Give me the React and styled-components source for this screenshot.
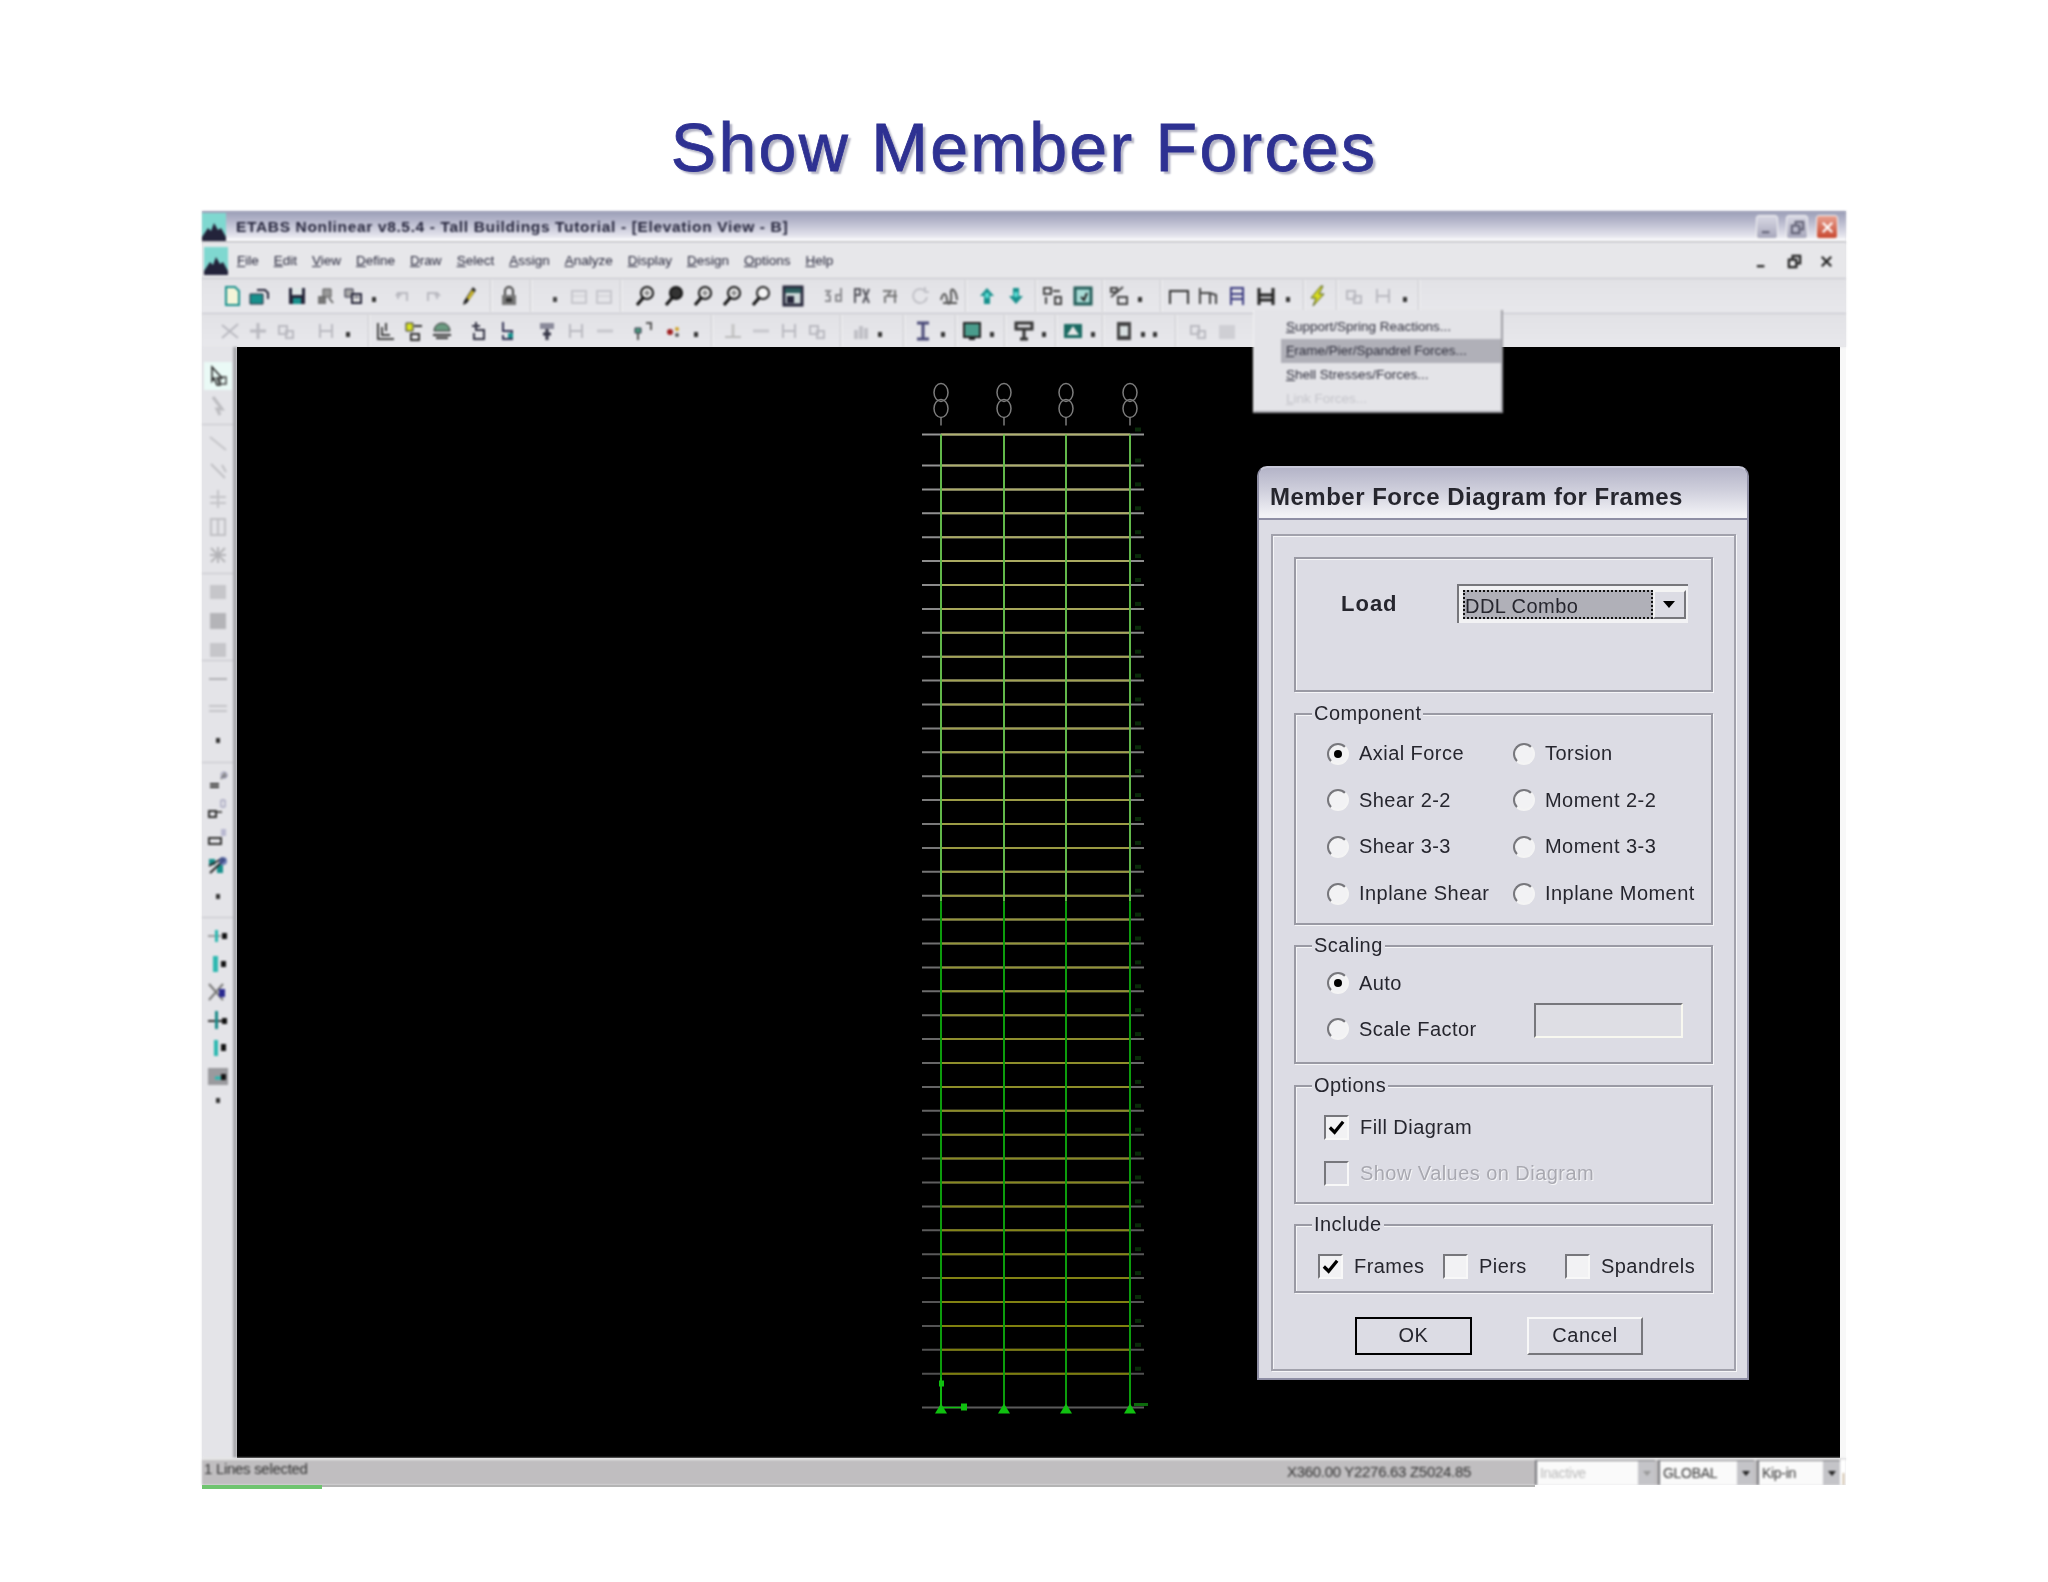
import React from "react";
import styled, { createGlobalStyle } from "styled-components";

const GlobalStyle = createGlobalStyle`
  html, body { margin: 0; padding: 0; background: #fff; }
  * { box-sizing: border-box; }
`;

const TEAL = "#17908c";
const DARK = "#26263a";
const FADE = "#b9b9c0";

const shapes = {
  new: <><path d="M5 2h9l4 4v14H5z" fill="#f4f4d8" stroke={TEAL} strokeWidth="2" /></>,
  open: <><path d="M2 9h13v10H2z" fill={TEAL} stroke={DARK} /><path d="M9 5h8l3 3v6" fill="none" stroke={DARK} strokeWidth="2" /></>,
  save: <><path d="M3 3h16v16H3z" fill={DARK} /><path d="M6 3h10v7H6z" fill="#dfe6e6" /><path d="M7 13h8v6H7z" fill={TEAL} /></>,
  saveas: <><path d="M4 11h8v8H4z" fill="#777" /><path d="M9 4h8v8H9z" fill="#999" stroke="#555" /><path d="M15 13l4 5" stroke="#666" strokeWidth="2" /></>,
  print: <><path d="M3 4h8v8H3z" fill="#aaa" stroke={DARK} /><path d="M10 9h9v9h-9z" fill="#ddd" stroke={DARK} strokeWidth="2" /><path d="M12 12h5" stroke={DARK} /></>,
  undo: <path d="M5 14V8h9v8M5 8l-2 3M5 8l3 3" fill="none" stroke={FADE} strokeWidth="2" />,
  redo: <path d="M17 14V8H8v8M17 8l-2 3M17 8l3 3" fill="none" stroke={FADE} strokeWidth="2" />,
  pen: <><path d="M15 2l3 3-9 13-4 2 1-4z" fill="#222" /><path d="M14 5l2 2-5 8-2-2z" fill="#d8c020" /></>,
  lock: <><path d="M7 10V6a4 4 0 018 0v4" fill="none" stroke="#444" strokeWidth="2" /><path d="M4 10h14v10H4z" fill="#777" /><path d="M8 13h6v4H8z" fill="#333" /></>,
  tick: <path d="M10 12h4v5h-4z" fill="#444" />,
  faint: <><path d="M4 6h14v12H4z" fill="none" stroke="#c6c6cc" strokeWidth="2" /><path d="M4 11h14" stroke="#c6c6cc" /></>,
  zoom: <><circle cx="13" cy="8" r="6" fill="#eee" stroke="#111" strokeWidth="2" /><path d="M9 13l-6 7" stroke="#111" strokeWidth="3" /><path d="M10 8h6M13 5v6" stroke="#444" /></>,
  zoomd: <><circle cx="13" cy="8" r="6" fill="#333" stroke="#111" strokeWidth="2" /><path d="M9 13l-6 7" stroke="#111" strokeWidth="3" /></>,
  zoome: <><circle cx="13" cy="8" r="6" fill="#f4f4f4" stroke="#222" strokeWidth="2" /><path d="M9 13l-6 7" stroke="#111" strokeWidth="3" /></>,
  win: <><path d="M2 2h18v18H2z" fill="#cfdada" stroke={DARK} strokeWidth="3" /><path d="M3 3h16v5H3z" fill="#2c5c5c" /><path d="M5 11h7v7H5z" fill={DARK} /></>,
  three: <><path d="M3 6h5l-3 4 3 1v5H3" fill="none" stroke="#8c8c90" strokeWidth="2" /><path d="M19 3v13h-5v-6h5" fill="none" stroke="#8c8c90" strokeWidth="2" /></>,
  plan: <><path d="M4 4h5v6H4zM4 10v8M12 4l6 14M18 4l-6 14" fill="none" stroke="#56565e" strokeWidth="2" /></>,
  elev: <><path d="M3 6h8l-4 5h10M5 11v7M15 5v13" fill="none" stroke="#777" strokeWidth="2" /></>,
  rot: <path d="M16 6a7 7 0 10 2 6M16 2v5h4" fill="none" stroke="#c2c2c8" strokeWidth="2" />,
  perspective: <path d="M3 15c2-8 5-8 6 0s5 2 4-6 5-5 6 6M5 18h14" fill="none" stroke="#555" strokeWidth="2" />,
  up: <><path d="M11 3l7 8h-4v8H8v-8H4z" fill={TEAL} /><path d="M9 8h4v5H9z" fill="#55d8d0" /></>,
  down: <><path d="M11 19l7-8h-4V3H8v8H4z" fill={TEAL} /><path d="M9 7h4v5H9z" fill="#55d8d0" /></>,
  snap: <><path d="M3 3h7v6H3zM12 6h7M5 12v7M14 12h6v7h-6z" fill="none" stroke="#444" strokeWidth="2" /></>,
  box: <><path d="M3 3h16v16H3z" fill="#a9dcd6" stroke="#225c58" strokeWidth="3" /><path d="M9 12l3 3 3-7" fill="none" stroke="#222" strokeWidth="2" /></>,
  pct: <><path d="M3 12l12-10" stroke="#444" strokeWidth="2" /><path d="M3 3h6v4H3z" fill="none" stroke="#444" strokeWidth="2" /><path d="M10 12h9v7h-9z" fill="none" stroke="#444" strokeWidth="2" /></>,
  gate: <path d="M2 19V6h18v13" fill="none" stroke="#333" strokeWidth="2" />,
  gate2: <path d="M3 19V3M3 8h10l6 2v9M13 8v11" fill="none" stroke="#444" strokeWidth="2" />,
  gate3: <path d="M5 20V3h12v17M5 9h12M5 14h12" fill="none" stroke="#3a3a80" strokeWidth="2" />,
  gate4: <path d="M4 20V3M18 20V3M4 10h14M4 15h14" fill="none" stroke="#222" strokeWidth="3" />,
  bolt: <path d="M14 1L4 13h5l-3 8 11-12h-5l4-8z" fill="#d8dc20" stroke="#556020" />,
  fade1: <path d="M3 18L19 4M3 5l16 13" stroke={FADE} strokeWidth="2" />,
  fade2: <path d="M11 3v16M3 11h16" stroke={FADE} strokeWidth="3" />,
  fade3: <path d="M4 6h8v8H4zM11 11h7v7h-7z" fill="none" stroke={FADE} strokeWidth="2" />,
  fade4: <path d="M5 4v14M5 11h12M17 4v14" fill="none" stroke={FADE} strokeWidth="2" />,
  frame1: <path d="M3 3v16h16M7 7v8h8M11 3v8" fill="none" stroke="#444" strokeWidth="2" />,
  frame2: <><path d="M3 3h7v8H3z" fill="#d8e020" stroke="#333" /><path d="M11 6h8M8 14h8v6H8z" fill="none" stroke="#333" strokeWidth="2" /></>,
  frame3: <><path d="M3 11a8 8 0 0116 0z" fill="#6a9a80" stroke="#333" /><path d="M2 15h18M5 18h12" stroke="#333" strokeWidth="2" /></>,
  frame4: <path d="M7 2v8h8v9H5v-6M3 6h8" fill="none" stroke="#334" strokeWidth="2" />,
  frame5: <><path d="M7 2v9h9v8H7v-4" fill="none" stroke="#335" strokeWidth="2" /><path d="M12 13h5v5h-5z" fill={TEAL} /></>,
  frame6: <><path d="M4 3h14v6H4z" fill="#8a8a9a" /><path d="M11 9v11M7 14h8" stroke="#334" strokeWidth="3" /></>,
  frame7: <><path d="M3 8h6v5H3z" fill="#4a9a80" stroke="#334" /><path d="M6 13v7M14 3h5v7" fill="none" stroke="#555" strokeWidth="2" /></>,
  dots: <><circle cx="8" cy="12" r="3" fill="#a02020" /><circle cx="15" cy="9" r="2" fill="#d0a020" /><circle cx="15" cy="15" r="2" fill="#555" /></>,
  bar: <><path d="M3 17h16" stroke="#bbb" strokeWidth="2" /><path d="M11 4v12" stroke="#c4c4c4" strokeWidth="3" /></>,
  dash: <path d="M3 11h16" stroke="#c6c6cc" strokeWidth="3" />,
  chart: <path d="M4 19V10h4v9zM9 19V6h4v13zM14 19V8h4v11z" fill="#c0c0c6" />,
  ibeam: <path d="M5 3h12M5 19h12M11 3v16" fill="none" stroke="#4a4a78" strokeWidth="3" />,
  deck: <><path d="M3 3h16v14H3z" fill="#4a9c8c" stroke="#222" strokeWidth="2" /><path d="M8 17h6v3H8z" fill="#222" /></>,
  glass: <><path d="M3 3h16v6H3z" fill="none" stroke="#333" strokeWidth="3" /><path d="M11 9v10M7 19h8" stroke="#333" strokeWidth="3" /></>,
  tri: <><path d="M2 4h18v14H2z" fill="#1a6a62" /><path d="M11 6l6 9H5z" fill="#e8e8e8" /></>,
  col: <><path d="M4 2h14v18H4z" fill="#444" /><path d="M7 6h8v10H7z" fill="#d8e0e0" /></>,
  blur: <path d="M3 5h16v14H3z" fill="#cfcfd4" />,
  cursor: <><path d="M5 2l10 11h-5l3 7h-3l-3-7-2 3z" fill="#e8f8f4" stroke="#222" strokeWidth="1.5" /><path d="M13 12h6v7h-6z" fill="none" stroke="#444" strokeWidth="1.5" /></>,
  pointer2: <path d="M6 2l9 12h-5l3 6" fill="none" stroke="#bcbcc0" strokeWidth="3" />,
  diag: <path d="M3 5l16 13" stroke="#c4c4c8" strokeWidth="2" />,
  diag2: <path d="M4 4l14 14M15 5l4 7" stroke="#c0c0c4" strokeWidth="2" />,
  cross: <path d="M11 2v18M3 9h16M3 15h16" stroke="#c4c4c8" strokeWidth="2" />,
  crossb: <path d="M4 3h14v16H4zM11 3v16" fill="none" stroke="#c0c0c4" strokeWidth="2" />,
  star: <path d="M4 4l14 14M18 4L4 18M11 3v16M3 11h16" stroke="#b4b4b8" strokeWidth="2" />,
  slab: <path d="M3 4h16v14H3z" fill="#c6c6ca" />,
  slabd: <path d="M3 3h16v16H3z" fill="#b4b4b8" />,
  line: <path d="M2 11h18" stroke="#b0b0b4" strokeWidth="2" />,
  linee: <path d="M2 9h18M2 14h18" stroke="#c4c4c8" strokeWidth="2" />,
  node1: <><path d="M3 17h9M3 14h9" stroke="#333" strokeWidth="2" /><path d="M14 9l4-6M17 8l3-3" stroke="#777" strokeWidth="2" /><circle cx="17" cy="5" r="3" fill="none" stroke="#9090b0" /></>,
  node2: <><path d="M2 13h7v6H2z" fill="none" stroke="#333" strokeWidth="2" /><path d="M10 14h5" stroke="#555" strokeWidth="2" /><path d="M14 2h4v7h-4z" fill="none" stroke="#9090b0" /></>,
  node3: <><path d="M2 12h12v6H2z" fill="none" stroke="#333" strokeWidth="2" /><path d="M14 3h5v7h-5z" fill="#b8b8d0" /></>,
  node4: <><path d="M2 5h6v6H2zM10 11h6v8h-6z" fill={TEAL} /><path d="M2 12l14-8M3 19L18 5" stroke="#222" strokeWidth="2" /><circle cx="16" cy="7" r="4" fill="#3a50a0" opacity=".7" /></>,
  fix1: <><path d="M1 11h13" stroke="#555" /><path d="M8 5h3v12H8z" fill="#2cb8b0" /><path d="M15 8h5v6h-5z" fill="#111" /></>,
  fix2: <><path d="M6 3h5v16H6z" fill="#2cb8b0" /><path d="M14 8h5v6h-5z" fill="#111" /></>,
  fix3: <><path d="M2 3l14 16M2 19L16 3" stroke="#777" strokeWidth="2" /><path d="M12 8h6v8h-6z" fill="#2a2a90" /></>,
  fix4: <><path d="M1 12h14" stroke="#333" strokeWidth="2" /><path d="M8 2h3v18H8z" fill="#1a8a88" /><path d="M15 9h5v6h-5z" fill="#111" /></>,
  fix5: <><path d="M7 3h4v16H7z" fill="#2cb8b0" /><path d="M12 10h7M14 7h5v7h-5z" fill="#111" /></>,
  fix6: <><path d="M1 3h20v17H1z" fill="#9a9a9e" /><path d="M8 13h6" stroke="#2cb8b0" strokeWidth="3" /><path d="M14 9h5v6h-5z" fill="#111" /></>,
};

// one row of the toolbar: each group sits $ml after what is before it
const rowOne = [
  { ml: 19, gap: 5, items: ["new", "open"] },
  { ml: 16, gap: 6, items: ["save", "saveas", "print", "."] },
  { ml: 15, gap: 5, items: ["undo", "redo"] },
  { ml: 16, gap: 0, items: ["pen"] },
  { sep: 10 },
  { ml: 6, gap: 0, items: ["lock"] },
  { sep: 10 },
  { ml: 11, gap: 3, items: ["tick", "faint", "faint"] },
  { sep: 5 },
  { ml: 12, gap: 7, items: ["zoom", "zoomd", "zoom", "zoom", "zoome"] },
  { ml: 10, gap: 0, items: ["win"] },
  { ml: 18, gap: 7, items: ["three", "plan", "elev", "rot", "perspective"] },
  { sep: 5 },
  { ml: 9, gap: 7, items: ["up", "down"] },
  { sep: 8 },
  { ml: 4, gap: 9, items: ["snap", "box"] },
  { sep: 8 },
  { ml: 4, gap: 6, items: ["pct", "."] },
  { sep: 16 },
  { ml: 6, gap: 7, items: ["gate", "gate2", "gate3", "gate4", "."] },
  { sep: 11 },
  { ml: 2, gap: 0, items: ["bolt"] },
  { sep: 7 },
  { ml: 5, gap: 7, items: ["fade3", "fade4", "."] },
  { sep: 9 },
];

const rowTwo = [
  { ml: 17, gap: 6, items: ["fade1", "fade2", "fade3"] },
  { ml: 18, gap: 7, items: ["fade4", "."] },
  { sep: 16 },
  { ml: 5, gap: 6, items: ["frame1", "frame2", "frame3"] },
  { ml: 16, gap: 5, items: ["frame4", "frame5"] },
  { ml: 18, gap: 7, items: ["frame6", "fade4", "dash"] },
  { ml: 16, gap: 8, items: ["frame7", "dots", "."] },
  { sep: 11 },
  { ml: 9, gap: 6, items: ["bar", "dash", "fade4", "fade3"] },
  { sep: 12 },
  { ml: 8, gap: 4, items: ["chart", "."] },
  { sep: 19 },
  { ml: 7, gap: 5, items: ["ibeam", "."] },
  { sep: 8 },
  { ml: 4, gap: 5, items: ["deck", "."] },
  { sep: 8 },
  { ml: 7, gap: 5, items: ["glass", "."] },
  { sep: 7 },
  { ml: 5, gap: 5, items: ["tri", "."] },
  { sep: 5 },
  { ml: 9, gap: 4, items: ["col", ".", "."] },
  { sep: 16 },
  { ml: 10, gap: 7, items: ["fade3", "blur"] },
];

const sideGroups = [
  { mt: 18, gap: 8, items: ["cursor", "pointer2"] },
  { mt: 15, gap: 6, line: true, items: ["diag", "diag2", "cross", "crossb", "star"] },
  { mt: 15, gap: 7, line: true, items: ["slab", "slabd", "slab"] },
  { mt: 7, gap: 7, line: true, items: ["line", "linee"] },
  { mt: 12, gap: 0, items: ["."] },
  { mt: 27, gap: 6, line: true, items: ["node1", "node2", "node3", "node4"] },
  { mt: 11, gap: 0, items: ["."] },
  { mt: 26, gap: 6, line: true, items: ["fix1", "fix2", "fix3", "fix4", "fix5", "fix6"] },
  { mt: 4, gap: 0, items: ["."] },
];

const menus = [
  ["F", "ile"], ["E", "dit"], ["V", "iew"], ["D", "efine"], ["D", "raw"], ["S", "elect"],
  ["A", "ssign"], ["A", "nalyze"], ["D", "isplay"], ["D", "esign"], ["O", "ptions"], ["H", "elp"],
];

const Tool = ({ kind }) =>
  kind === "." ? (
    <ToolDot />
  ) : (
    <ToolIcon viewBox="0 0 22 22">{shapes[kind]}</ToolIcon>
  );

const ToolRow = ({ groups, $height }) => (
  <Toolbar $height={$height}>
    {groups.map((g, i) =>
      g.sep ? (
        <ToolSep key={i} $ml={g.sep} />
      ) : (
        <ToolGroup key={i} $ml={g.ml} $gap={g.gap}>
          {g.items.map((k, j) => (
            <Tool key={j} kind={k} />
          ))}
        </ToolGroup>
      )
    )}
  </Toolbar>
);

const AppLogo = () => (
  <LogoSvg viewBox="0 0 24 28">
    <path d="M0 0h24v28H0z" fill="#7fd8d0" />
    <path d="M0 24l6-9 3 3 3-8 4 7 3-2 5 9z" fill="#23233a" />
    <path d="M0 24h24v4H0z" fill="#23233a" />
  </LogoSvg>
);

// the frame elevation drawn on the black canvas
const storyLines = [433, ...Array.from({ length: 39 }, (_, i) => 464 + i * 23.9)];
const columns = [941, 1004, 1066, 1130];

const mix = (a, b, t) => `rgb(${a.map((v, i) => Math.round(v + (b[i] - v) * t)).join(",")})`;

const Elevation = () => (
  <CanvasSvg viewBox="237 347 1603 1108">
    {columns.map((x) => (
      <g key={x} fill="none" stroke="#7c7c7c" strokeWidth="1.5">
        <ellipse cx={x} cy="391" rx="7" ry="9" />
        <ellipse cx={x} cy="407" rx="7" ry="9" />
        <line x1={x} y1="416" x2={x} y2="424" />
      </g>
    ))}
    {storyLines.map((y) => {
      const t = (y - 433) / 940;
      return (
        <g key={y} strokeWidth="2">
          <line x1="922" x2="1144" y1={y} y2={y} stroke={mix([150, 150, 150], [80, 80, 80], t)} />
          <line x1="941" x2="1130" y1={y} y2={y} stroke={mix([176, 176, 110], [125, 125, 10], t)} />
          <rect x="1135" y={y - 7} width="6" height="4" fill="#0a2a0a" />
        </g>
      );
    })}
    <line x1="922" x2="1144" y1="1406" y2="1406" stroke="#5a5a5a" strokeWidth="2" />
    {columns.map((x) => (
      <g key={x}>
        <line x1={x} x2={x} y1="433" y2="900" stroke="#62b84a" strokeWidth="2" />
        <line x1={x} x2={x} y1="900" y2="1406" stroke="#0c9c0c" strokeWidth="2" />
        <path d={`M${x - 6} 1412l6-10 6 10z`} fill="#10c010" />
      </g>
    ))}
    <path d="M941 1406h22M941 1406v-30" stroke="#10c010" strokeWidth="1.5" />
    <rect x="961" y="1402" width="6" height="7" fill="#10c010" />
    <rect x="939" y="1379" width="5" height="6" fill="#10c010" />
    <path d="M1134 1403h14" stroke="#0c6a0c" strokeWidth="3" />
  </CanvasSvg>
);

const Radio = ({ on, children }) => (
  <Option>
    <RadioMark $on={on} />
    <span>{children}</span>
  </Option>
);

const Check = ({ on, muted, children }) => (
  <CheckOption $muted={muted}>
    <CheckMark $muted={muted}>
      {on && (
        <svg viewBox="0 0 20 20" width="19" height="19">
          <path d="M3 10l5 5 9-11" fill="none" stroke="#000" strokeWidth="3.4" />
        </svg>
      )}
    </CheckMark>
    <span>{children}</span>
  </CheckOption>
);

const MiniCombo = ({ label, width, muted }) => (
  <StatusCombo $width={width} $muted={muted}>
    <span>{label}</span>
    <StatusArrow $muted={muted} />
  </StatusCombo>
);

const WinGlyph = ({ type }) => (
  <svg viewBox="0 0 16 16" width="15" height="15" fill="none" stroke="currentColor" strokeWidth="2.4">
    {type === "min" && <path d="M2 13h8" />}
    {type === "max" && <path d="M2 6h8v8H2zM6 5V2h8v8h-3" />}
    {type === "close" && <path d="M3 3l10 10M13 3L3 13" />}
  </svg>
);

export default function App() {
  return (
    <>
      <GlobalStyle />
      <Page>
        <Title>Show Member Forces</Title>
        <Window>
          <TitleBar>
            <AppLogo />
            <TitleText>ETABS Nonlinear v8.5.4 - Tall Buildings Tutorial - [Elevation View - B]</TitleText>
            <TitleButtons>
              <CapButton><WinGlyph type="min" /></CapButton>
              <CapButton><WinGlyph type="max" /></CapButton>
              <CapButton $close><WinGlyph type="close" /></CapButton>
            </TitleButtons>
          </TitleBar>

          <MenuBar>
            <AppLogo />
            <MenuList>
              {menus.map(([first, rest]) => (
                <MenuItem key={first + rest}>
                  <u>{first}</u>
                  {rest}
                </MenuItem>
              ))}
            </MenuList>
            <MdiButtons>
              <MdiButton><WinGlyph type="min" /></MdiButton>
              <MdiButton><WinGlyph type="max" /></MdiButton>
              <MdiButton><WinGlyph type="close" /></MdiButton>
            </MdiButtons>
          </MenuBar>

          <ToolRow groups={rowOne} $height={35} />
          <ToolRow groups={rowTwo} $height={34} />

          <Workspace>
            <SideBar>
              {sideGroups.map((g, i) => (
                <SideGroup key={i} $mt={g.mt} $gap={g.gap} $line={g.line}>
                  {g.items.map((k, j) =>
                    i === 0 && j === 0 ? (
                      <ActiveTool key={j}><Tool kind={k} /></ActiveTool>
                    ) : (
                      <Tool key={j} kind={k} />
                    )
                  )}
                </SideGroup>
              ))}
            </SideBar>
            <Canvas>
              <Elevation />
            </Canvas>
            <RightEdge />
          </Workspace>

          <StatusBar>
            <StatusText>1 Lines selected</StatusText>
            <Coords>X360.00 Y2276.63 Z5024.85</Coords>
            <StatusCombos>
              <MiniCombo label="Inactive" width={120} muted />
              <MiniCombo label="GLOBAL" width={96} />
              <MiniCombo label="Kip-in" width={83} />
            </StatusCombos>
            <StatusEnd />
          </StatusBar>
          <Progress>
            <ProgressFill />
            <ProgressTrack />
          </Progress>

          <PopupMenu>
            <PopupItem><u>S</u>upport/Spring Reactions...</PopupItem>
            <PopupItem $active><u>F</u>rame/Pier/Spandrel Forces...</PopupItem>
            <PopupItem><u>S</u>hell Stresses/Forces...</PopupItem>
            <PopupItem $disabled><u>L</u>ink Forces...</PopupItem>
          </PopupMenu>

          <Dialog>
            <DialogTitle>Member Force Diagram for Frames</DialogTitle>
            <DialogFrame>
              <Group $height={135}>
                <LoadRow>
                  <LoadLabel>Load</LoadLabel>
                  <Combo>
                    <ComboValue>DDL Combo</ComboValue>
                    <ComboButton />
                  </Combo>
                </LoadRow>
              </Group>

              <Group $height={212}>
                <Legend>Component</Legend>
                <RadioGrid>
                  <Radio on>Axial Force</Radio>
                  <Radio>Torsion</Radio>
                  <Radio>Shear 2-2</Radio>
                  <Radio>Moment 2-2</Radio>
                  <Radio>Shear 3-3</Radio>
                  <Radio>Moment 3-3</Radio>
                  <Radio>Inplane Shear</Radio>
                  <Radio>Inplane Moment</Radio>
                </RadioGrid>
              </Group>

              <Group $height={119}>
                <Legend>Scaling</Legend>
                <ScalingBody>
                  <OptionColumn>
                    <Radio on>Auto</Radio>
                    <Radio>Scale Factor</Radio>
                  </OptionColumn>
                  <ScaleInput />
                </ScalingBody>
              </Group>

              <Group $height={119}>
                <Legend>Options</Legend>
                <CheckColumn>
                  <Check on>Fill Diagram</Check>
                  <Check muted>Show Values on Diagram</Check>
                </CheckColumn>
              </Group>

              <Group $height={69}>
                <Legend>Include</Legend>
                <IncludeRow>
                  <Check on>Frames</Check>
                  <Check>Piers</Check>
                  <Check>Spandrels</Check>
                </IncludeRow>
              </Group>

              <ButtonRow>
                <DialogButton $default>OK</DialogButton>
                <DialogButton>Cancel</DialogButton>
              </ButtonRow>
            </DialogFrame>
          </Dialog>
        </Window>
      </Page>
    </>
  );
}

const Page = styled.div`
  width: 2048px;
  height: 1582px;
  padding-top: 113px;
  background: #fff;
  display: flex;
  flex-direction: column;
  align-items: center;
  overflow: hidden;
`;

const Title = styled.h1`
  margin: 0;
  font: 400 68px/1 "Liberation Sans", Arial, sans-serif;
  letter-spacing: 2.3px;
  color: #2e3192;
  -webkit-text-stroke: 0.8px #2e3192;
  text-shadow: 3px 3px 2px #b4b4c4;
`;

const Window = styled.div`
  position: relative;
  width: 1644px;
  margin-top: 30px;
  background: #e4e4e8;
  font-family: "Liberation Sans", Arial, sans-serif;
`;

const TitleBar = styled.div`
  height: 32px;
  display: flex;
  align-items: center;
  padding-right: 8px;
  background: linear-gradient(#9a9db6 0%, #b9bace 35%, #e6e6ee 80%, #fff 92%, #9c9ca4 100%);
  filter: blur(0.9px);
`;

const LogoSvg = styled.svg`
  width: 24px;
  height: 28px;
  flex: none;
`;

const TitleText = styled.div`
  margin-left: 10px;
  font-size: 15.5px;
  font-weight: 700;
  letter-spacing: 0.65px;
  color: #23233a;
  white-space: nowrap;
`;

const TitleButtons = styled.div`
  margin-left: auto;
  display: flex;
  gap: 8px;
`;

const CapButton = styled.div`
  width: 22px;
  height: 24px;
  display: flex;
  align-items: center;
  justify-content: center;
  border-radius: 3px;
  color: ${({ $close }) => ($close ? "#fff" : "#66667a")};
  background: ${({ $close }) =>
    $close ? "linear-gradient(#e8a090, #c84830)" : "linear-gradient(#d8d8e4, #a8a8bc)"};
  border: 1px solid #f4f4f4;
`;

const MenuBar = styled.div`
  height: 35px;
  display: flex;
  align-items: center;
  padding: 0 10px 0 2px;
  background: #e7e7ea;
  filter: blur(0.9px);
`;

const MenuList = styled.div`
  display: flex;
  gap: 15px;
  margin-left: 9px;
`;

const MenuItem = styled.span`
  font-size: 13.5px;
  color: #26263a;
`;

const MdiButtons = styled.div`
  margin-left: auto;
  display: flex;
  gap: 12px;
`;

const MdiButton = styled.div`
  width: 20px;
  height: 24px;
  padding-top: 2px;
  display: flex;
  align-items: center;
  justify-content: center;
  color: #222;
`;

const Toolbar = styled.div`
  height: ${({ $height }) => $height}px;
  display: flex;
  align-items: center;
  background: linear-gradient(#e2e2e6, #e8e8ec);
  border-top: 1px solid #c6c6cc;
  filter: blur(0.9px);
`;

const ToolGroup = styled.div`
  display: flex;
  align-items: center;
  flex: none;
  margin-left: ${({ $ml }) => $ml}px;
  gap: ${({ $gap }) => $gap}px;
`;

const ToolIcon = styled.svg`
  width: 22px;
  height: 22px;
  flex: none;
`;

const ToolDot = styled.i`
  display: block;
  flex: none;
  width: 8px;
  height: 5px;
  margin: 7px 0 0;
  background: linear-gradient(90deg, transparent 2px, #333 2px, #333 6px, transparent 6px);
`;

const ToolSep = styled.i`
  display: block;
  flex: none;
  width: 2px;
  height: 32px;
  margin-left: ${({ $ml }) => $ml}px;
  background: #c4c4ca;
  border-right: 1px solid #f8f8f8;
`;

const Workspace = styled.div`
  height: 1111px;
  display: flex;
`;

const SideBar = styled.div`
  width: 35px;
  flex: none;
  display: flex;
  flex-direction: column;
  align-items: center;
  background: #e4e4e8;
  border-right: 4px solid #a8a8ac;
  filter: blur(1px);
`;

const SideGroup = styled.div`
  display: flex;
  flex-direction: column;
  align-items: center;
  width: 100%;
  gap: ${({ $gap }) => $gap}px;
  margin-top: ${({ $mt, $line }) => ($line ? $mt - 8 : $mt)}px;
  padding-top: ${({ $line }) => ($line ? 7 : 0)}px;
  border-top: ${({ $line }) => ($line ? "1px solid #c4c4ca" : "none")};
`;

const ActiveTool = styled.div`
  outline: 3px solid #eafaf6;
  background: #eafaf6;
  display: flex;
`;

const Canvas = styled.div`
  position: relative;
  width: 1603px;
  flex: none;
  background: #000;
`;

const CanvasSvg = styled.svg`
  position: absolute;
  inset: 0;
  width: 100%;
  height: 100%;
  filter: blur(0.6px);
`;

const RightEdge = styled.div`
  flex: 1;
  background: #f8f8f8;
`;

const StatusBar = styled.div`
  height: 27px;
  display: flex;
  background: #c0bec0;
  border-top: 2px solid #e8e8e8;
  filter: blur(0.9px);
  color: #333;
  font-size: 15px;
`;

const StatusText = styled.div`
  padding: 0 0 0 2px;
  letter-spacing: -0.3px;
`;

const Coords = styled.div`
  margin-left: auto;
  padding-top: 3px;
  margin-right: 64px;
  letter-spacing: -0.3px;
`;

const StatusCombos = styled.div`
  display: flex;
  gap: 3px;
`;

const StatusCombo = styled.div`
  width: ${({ $width }) => $width}px;
  display: flex;
  align-items: center;
  justify-content: space-between;
  padding-left: 3px;
  background: #fafafa;
  border-left: 2px solid #77777c;
  border-top: 1px solid #77777c;
  color: ${({ $muted }) => ($muted ? "#bbb" : "#333")};
  font-size: 14px;
  letter-spacing: -0.3px;
`;

const StatusArrow = styled.i`
  position: relative;
  width: 17px;
  height: 100%;
  background: #c4c4c8;

  &::after {
    content: "";
    position: absolute;
    left: 5px;
    top: 10px;
    border: 4px solid transparent;
    border-top: 5px solid ${({ $muted }) => ($muted ? "#999" : "#222")};
    border-bottom: 0;
  }
`;

const StatusEnd = styled.div`
  width: 6px;
  background: linear-gradient(90deg, #fff 3px, #a88a60 3px, #a88a60 4px, #fff 4px) bottom / 100% 50% no-repeat, #fff;
`;

const Progress = styled.div`
  height: 4px;
  display: flex;
  background: #fff;
  filter: blur(0.6px);
`;

const ProgressFill = styled.div`
  width: 120px;
  height: 100%;
  background: #6fc46f;
`;

const ProgressTrack = styled.div`
  width: 1213px;
  height: 2px;
  background: #b4b4b4;
`;

const PopupMenu = styled.div`
  position: absolute;
  left: 1051px;
  top: 99px;
  width: 250px;
  height: 103px;
  padding-top: 5px;
  background: #e4e4e8;
  border-right: 2px solid #a0a0a6;
  border-bottom: 2px solid #a0a0a6;
  border-left: 1px solid #f4f4f4;
  filter: blur(0.9px);
  z-index: 2;
`;

const PopupItem = styled.div`
  height: 24px;
  margin-left: 27px;
  padding-left: 5px;
  font-size: 13.5px;
  line-height: 24px;
  white-space: nowrap;
  background: ${({ $active }) => ($active ? "#b0b0b8" : "transparent")};
  color: ${({ $disabled }) => ($disabled ? "#c4c4ca" : "#2c2c3a")};
`;

const Dialog = styled.div`
  position: absolute;
  left: 1055px;
  top: 255px;
  width: 492px;
  height: 914px;
  padding: 0 4px 4px;
  background: #dcdce4;
  border-radius: 10px 10px 0 0;
  border: 2px solid #8e8ea4;
  border-top-color: #c8c8d8;
  filter: blur(0.4px);
  z-index: 3;
`;

const DialogTitle = styled.div`
  height: 52px;
  margin: 0 -4px;
  padding: 8px 0 0 11px;
  display: flex;
  align-items: center;
  font-size: 24px;
  font-weight: 700;
  letter-spacing: 0.5px;
  color: #26262e;
  border-radius: 8px 8px 0 0;
  background: linear-gradient(#b4b4c8, #cfcfdc 45%, #f2f2f6 95%);
  border-bottom: 2px solid #8e8ea4;
`;

const DialogFrame = styled.div`
  margin: 14px 7px 0 8px;
  height: 837px;
  padding: 21px 21px 0 21px;
  display: flex;
  flex-direction: column;
  gap: 20.5px;
  border: 2px solid #a2a2ac;
  box-shadow: 1px 1px 0 #f6f6f8, inset 1px 1px 0 #f6f6f8;
`;

const Group = styled.div`
  position: relative;
  height: ${({ $height }) => $height}px;
  flex: none;
  border: 2px solid #9a9aa4;
  box-shadow: 1px 1px 0 #f6f6f8, inset 1px 1px 0 #f6f6f8;
  font-size: 20px;
  letter-spacing: 0.45px;
  color: #26262e;
`;

const Legend = styled.div`
  position: absolute;
  left: 16px;
  top: -17px;
  padding: 0 2px;
  background: #dcdce4;
  line-height: 30px;
`;

const LoadRow = styled.div`
  display: flex;
  align-items: center;
  padding: 25px 0 0 45px;
`;

const LoadLabel = styled.div`
  width: 116px;
  font-size: 22px;
  font-weight: 700;
  letter-spacing: 1px;
`;

const Combo = styled.div`
  width: 231px;
  height: 39px;
  display: flex;
  align-items: center;
  padding: 4px 2px 4px 4px;
  background: #f2f2f4;
  border-left: 2px solid #77777c;
  border-top: 2px solid #77777c;
`;

const ComboValue = styled.div`
  flex: 1;
  height: 100%;
  padding-left: 0;
  line-height: 28px;
  background: #b0b0b8;
  border: 2px dotted #111;
`;

const ComboButton = styled.div`
  position: relative;
  width: 33px;
  height: 100%;
  background: #dcdce4;
  border: 2px solid;
  border-color: #f4f4f4 #77777c #77777c #f4f4f4;

  &::after {
    content: "";
    position: absolute;
    left: 8px;
    top: 9px;
    border: 6px solid transparent;
    border-top: 7px solid #000;
    border-bottom: 0;
  }
`;

const RadioGrid = styled.div`
  display: grid;
  grid-template-columns: 186px auto;
  grid-auto-rows: 46.6px;
  padding: 16px 0 0 31px;
`;

const Option = styled.label`
  display: flex;
  align-items: center;
  gap: 10px;
  white-space: nowrap;
`;

const RadioMark = styled.i`
  display: block;
  position: relative;
  flex: none;
  width: 22px;
  height: 22px;
  border-radius: 50%;
  background: #f2f2f4;
  border: 2px solid;
  border-color: #77777c #f4f4f4 #f4f4f4 #77777c;

  &::after {
    content: "";
    display: ${({ $on }) => ($on ? "block" : "none")};
    position: absolute;
    left: 5px;
    top: 5px;
    width: 8px;
    height: 8px;
    border-radius: 50%;
    background: #000;
  }
`;

const ScalingBody = styled.div`
  display: flex;
  padding: 13px 0 0 31px;
`;

const OptionColumn = styled.div`
  display: grid;
  grid-auto-rows: 46px;
  width: 207px;
`;

const ScaleInput = styled.div`
  width: 149px;
  height: 35px;
  margin-top: 43px;
  background: #dedee4;
  border: 2px solid;
  border-color: #77777c #f8f8f0 #f8f8f0 #77777c;
`;

const CheckColumn = styled.div`
  display: grid;
  grid-auto-rows: 46px;
  padding: 18px 0 0 28px;
`;

const CheckOption = styled.label`
  display: flex;
  align-items: center;
  gap: 11px;
  white-space: nowrap;
  color: ${({ $muted }) => ($muted ? "#a8a8b0" : "inherit")};
  text-shadow: ${({ $muted }) => ($muted ? "1px 1px 0 #f6f6f8" : "none")};
`;

const CheckMark = styled.i`
  display: flex;
  align-items: center;
  justify-content: center;
  flex: none;
  width: 25px;
  height: 25px;
  background: ${({ $muted }) => ($muted ? "#dcdce4" : "#f2f2f4")};
  border: 2px solid;
  border-color: #77777c #f8f8f8 #f8f8f8 #77777c;
`;

const IncludeRow = styled.div`
  display: grid;
  grid-template-columns: 125px 122px auto;
  padding: 28px 0 0 22px;
`;

const ButtonRow = styled.div`
  display: flex;
  gap: 55px;
  padding: 3px 0 0 61px;
`;

const DialogButton = styled.div`
  width: ${({ $default }) => ($default ? 117 : 116)}px;
  height: 38px;
  display: flex;
  align-items: center;
  justify-content: center;
  font-size: 20px;
  letter-spacing: 0.5px;
  color: #26262e;
  background: #dcdce4;
  border: ${({ $default }) => ($default ? "2px solid #000" : "2px solid")};
  border-color: ${({ $default }) => ($default ? "#000" : "#f8f8f8 #77777c #77777c #f8f8f8")};
`;
